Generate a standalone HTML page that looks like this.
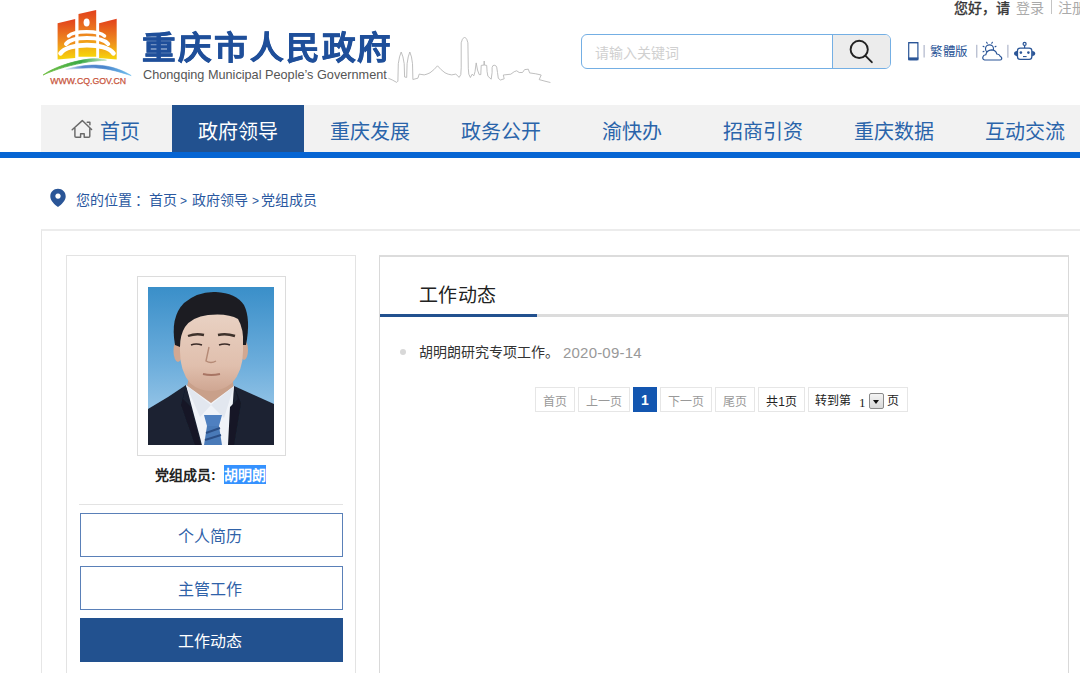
<!DOCTYPE html>
<html lang="zh-CN">
<head>
<meta charset="utf-8">
<style>
*{margin:0;padding:0;box-sizing:border-box;}
html,body{width:1080px;height:673px;overflow:hidden;background:#fff;}
body{font-family:"Liberation Sans",sans-serif;position:relative;color:#333;}
.abs{position:absolute;}
.t{position:absolute;white-space:nowrap;line-height:1;}
/* header */
#topuser{left:954px;top:1px;font-size:14px;color:#333;}
#search{left:581px;top:34px;width:310px;height:35px;border:1px solid #74afe4;border-radius:6px;overflow:hidden;}
#search .ph{left:13px;top:11px;font-size:14px;color:#d0d0d0;}
#search .btn{position:absolute;left:250px;top:0;width:60px;height:33px;background:#ececec;border-left:1px solid #74afe4;}
/* nav */
#nav{left:41px;top:105px;width:1039px;height:47px;background:#f2f2f2;}
#navline{left:0;top:152px;width:1080px;height:6px;background:#0665d3;}
.nv{position:absolute;top:0;height:47px;font-size:20px;color:#2a64aa;line-height:54px;text-align:center;}
.nv.act{background:#22518f;color:#fff;}
/* breadcrumb */
.crumb{top:193px;font-size:14px;color:#2a58a0;}
/* main */
#outer{left:41px;top:229px;width:1100px;height:500px;border:1px solid #e6e6e6;border-top:2px solid #ececec;}
#lp{left:66px;top:255px;width:290px;height:500px;border:1px solid #e3e3e3;}
#rp{left:379px;top:255px;width:690px;height:500px;border:1px solid #d9d9d9;border-top:2px solid #dcdcdc;}
#frame{left:137px;top:276px;width:149px;height:180px;border:1px solid #dcdcdc;}
.mb{position:absolute;left:80px;width:263px;height:44px;border:1px solid #5a80b8;font-size:16px;color:#2f62a8;text-align:center;line-height:45px;padding-right:3px;}
.mb.act{background:#22518f;color:#fff;border-color:#22518f;}
.pg{position:absolute;top:387px;height:25px;border:1px solid #e6e6e6;font-size:12px;color:#999;line-height:28px;text-align:center;}
</style>
</head>
<body>

<!-- top user -->
<div class="t" style="left:954px;top:1px;font-size:14px;color:#333;-webkit-text-stroke:0.35px #333;">您好，请</div>
<div class="t" style="left:1016px;top:1px;font-size:14px;color:#aaa;">登录</div>
<div class="abs" style="left:1051px;top:0px;width:1px;height:14px;background:#c4c4c4;"></div>
<div class="t" style="left:1058px;top:1px;font-size:14px;color:#aaa;">注册</div>

<!-- logo -->
<svg class="abs" style="left:0;top:0" width="140" height="95" viewBox="0 0 140 95">
<defs>
<linearGradient id="lg1" x1="0" y1="0" x2="0" y2="1"><stop offset="0" stop-color="#e2401c"/><stop offset="0.55" stop-color="#ee8a1e"/><stop offset="1" stop-color="#f7d60a"/></linearGradient>
<linearGradient id="lg2" x1="0" y1="0" x2="1" y2="0"><stop offset="0" stop-color="#8cc63f"/><stop offset="0.5" stop-color="#3aaa3a"/><stop offset="1" stop-color="#b8dca8"/></linearGradient>
<linearGradient id="lg3" x1="0" y1="0" x2="1" y2="0"><stop offset="0" stop-color="#d6e4f5"/><stop offset="0.5" stop-color="#5b8fd0"/><stop offset="1" stop-color="#7ec0ea"/></linearGradient>
</defs>
<path d="M57.6 23.3 L75.2 19.1 L75.2 58 L57.6 59.5 Z" fill="url(#lg1)"/>
<path d="M78.5 13.9 L96.2 9.9 L96.2 56.8 L78.5 56.8 Z" fill="url(#lg1)"/>
<path d="M99.1 23.3 L116.7 18.8 L116.7 59.5 L99.1 58 Z" fill="url(#lg1)"/>
<ellipse cx="86.6" cy="22.4" rx="3" ry="4" fill="#fff"/>
<path d="M60.5 53.4 C68 42.3, 106 42.3, 113.5 53.4" stroke="#fff" stroke-width="4.6" fill="none" stroke-linecap="round"/>
<path d="M66 44 C72 36, 102 36, 108.2 44" stroke="#fff" stroke-width="4" fill="none" stroke-linecap="round"/>
<path d="M68.5 36 C74 30.3, 99 30.3, 104.6 36" stroke="#fff" stroke-width="3.4" fill="none" stroke-linecap="round"/>
<linearGradient id="g2" x1="43" y1="0" x2="107" y2="0" gradientUnits="userSpaceOnUse"><stop offset="0" stop-color="#72c043"/><stop offset="0.6" stop-color="#3aa946"/><stop offset="1" stop-color="#c8e6c8"/></linearGradient>
<linearGradient id="g3" x1="66" y1="0" x2="131" y2="0" gradientUnits="userSpaceOnUse"><stop offset="0" stop-color="#dde8f4"/><stop offset="0.25" stop-color="#5b8ad0"/><stop offset="0.6" stop-color="#4a86cc"/><stop offset="1" stop-color="#72c0ee"/></linearGradient>
<path d="M43.1 75 C52 68.5, 70 61.5, 88.9 59.1 C96 58.4, 102 59, 106.5 60.2 C100 60.6, 94 61, 88.9 61.8 C72 64.5, 56 69, 43.1 75 Z" fill="url(#g2)" stroke="url(#g2)" stroke-width="0.8"/>
<path d="M65.8 69.4 C78 66, 88 65, 96 65.1 C112 65.6, 124 71, 131.2 75.6 C122 72.8, 110 68.6, 96 67.9 C86 67.6, 76 68.5, 65.8 69.4 Z" fill="url(#g3)" stroke="url(#g3)" stroke-width="0.6"/>
<text x="50.3" y="83.9" font-family="Liberation Sans" font-size="8.9" fill="#c8553d" stroke="#c8553d" stroke-width="0.25" textLength="75.7" lengthAdjust="spacingAndGlyphs">WWW.CQ.GOV.CN</text>
</svg>
<svg class="abs" style="left:380px;top:30px" width="180" height="60" viewBox="380 30 180 60">
<path d="M388.3 78.2 Q392 79.6 396.7 82.4 L397.9 81.2 L398.3 63.7 Q399.3 56 401.2 52 Q403.2 56 404.2 63.7 L404.6 77 L406.7 77.4 L407.1 63.7 Q408 56 409.8 52 Q411.8 56 412.5 63.7 L412.9 79.5 L417.9 78.2 L419.2 74.1 L424.2 74.9 Q427 74.3 430 72.8 Q434 70 437.5 65.8 Q441 70 445 72.8 Q448 74.5 451.7 74.9 L455.8 74.1 L459.2 77.4 L460.8 74.5 L461.2 67.8 L461.2 42.8 Q462 38.5 464.6 37 Q467.2 38.5 467.9 42.8 L468.3 68.3 L468.8 74.2 L470.4 77.5 L472.1 74.2 L473.8 75.8 L475 71.7 L476.2 62.9 L477.5 70 L479.2 74.6 L480.8 74.6 L481.2 65.4 L484.2 65 L484.2 61 L484.2 65 L486.7 65.4 L487.1 71.7 L487.9 76.2 L491.2 79.2 L492.1 72.5 L492.1 67.5 Q492.6 65 494.2 65.2 Q496.2 65.3 496.7 67.1 L497.5 72.5 L498.3 78.3 L500.4 80 L504.2 78.8 L503.3 75 L510.8 74.2 L514.2 71.7 L516.7 70.8 L519.2 72.5 L522.5 72.5 L524.6 69.6 L528.3 69.2 L529.6 72.9 L535.8 73.8 L541.2 75 L539.2 79.6 L545 81.2 L550.4 82.5" stroke="#b8b8b8" stroke-width="0.9" fill="none" stroke-linejoin="round"/>
</svg>
<div class="t" style="left:142px;top:31.5px;font-size:32px;letter-spacing:2.2px;font-weight:900;color:#1f4f9a;-webkit-text-stroke:0.6px #1f4f9a;transform:scaleX(1.05);transform-origin:0 0;">重庆市人民政府</div>
<div class="t" style="left:143px;top:69px;font-size:12.7px;color:#555;">Chongqing Municipal People’s Government</div>

<!-- search -->
<div class="abs" id="search"><div class="t ph">请输入关键词</div><div class="btn"></div></div>
<svg class="abs" style="left:840px;top:34px" width="45" height="34" viewBox="840 34 45 34">
<circle cx="859.2" cy="49.4" r="8.6" stroke="#222" stroke-width="1.9" fill="none"/>
<line x1="865.3" y1="55.6" x2="871.8" y2="62.2" stroke="#222" stroke-width="1.9" stroke-linecap="round"/>
</svg>
<svg class="abs" style="left:900px;top:36px" width="180" height="30" viewBox="900 36 180 30">
<g fill="none" stroke="#2a5597">
<rect x="908.7" y="42.6" width="9.2" height="17" rx="1" stroke-width="1.2"/>
</g>
<rect x="908.2" y="57.4" width="10.2" height="2.9" fill="#2a5597"/>
<rect x="908.2" y="42" width="10.2" height="1.2" fill="#2a5597"/>
<rect x="923.6" y="45" width="1" height="12.5" fill="#a0a8c0"/>
<rect x="976.3" y="44.8" width="1" height="12.9" fill="#a0a8c0"/>
<rect x="1007.4" y="44.8" width="1" height="12.9" fill="#a0a8c0"/>
<g fill="none" stroke="#2a5597" stroke-width="1.15" stroke-linecap="round" stroke-linejoin="round">
<circle cx="989.5" cy="48.8" r="4"/>
<path d="M984.6 60 Q982.4 59.6 982.8 57.2 Q983.3 55 985.8 54.8 Q986.6 50.2 991.6 49.9 Q995.8 50 996.8 54 Q999.3 53.9 1000.2 56.2 Q1002.2 57.2 1001.6 59.2 Q1001.2 60 1000 60 Z" fill="#fff"/>
<line x1="986.6" y1="42.3" x2="987.2" y2="43.3"/>
<line x1="992.4" y1="42.3" x2="991.8" y2="43.3"/>
<line x1="983.1" y1="46.3" x2="984" y2="46.8"/>
<line x1="996" y1="46.3" x2="995.1" y2="46.8"/>
<line x1="983.1" y1="51.8" x2="984" y2="51.3"/>
</g>
<g fill="none" stroke="#2a5597" stroke-width="1.25">
<rect x="1017.5" y="48" width="14.3" height="11.3" rx="2.6"/>
<circle cx="1024.6" cy="43.9" r="1.5"/>
<line x1="1024.6" y1="45.4" x2="1024.6" y2="48"/>
</g>
<path d="M1017.2 50.8 Q1014 51.5 1014 53.6 Q1014 55.7 1017.2 56.4 Z" fill="#2a5597"/>
<path d="M1032.1 50.8 Q1035.2 51.5 1035.2 53.6 Q1035.2 55.7 1032.1 56.4 Z" fill="#2a5597"/>
<circle cx="1020.9" cy="52.6" r="1.3" fill="#2a5597"/>
<circle cx="1028.4" cy="52.6" r="1.3" fill="#2a5597"/>
<rect x="1023" y="56" width="3.6" height="1.1" fill="#2a5597"/>
</svg>
<div class="t" style="left:930px;top:46px;font-size:12.5px;color:#2a5597;letter-spacing:-0.3px">繁體版</div>

<!-- nav -->
<div class="abs" id="nav">
  <div class="nv" style="left:13px;width:131px;">首页</div>
  <svg class="abs" style="left:29px;top:14px" width="24" height="22" viewBox="70 119 24 22"><path d="M72.2 129.8 L82.3 120.6 L91.6 129.6 M74.9 128.3 V136.2 Q74.9 137.3 76 137.3 H80.6 V133.8 H84.2 V137.3 H88.7 Q89.8 137.3 89.8 136.2 V128.3 M87.2 122.3 H89.9 V124.8" fill="none" stroke="#6a6a6a" stroke-width="1.45" stroke-linejoin="round" stroke-linecap="round"/></svg>
  <div class="nv act" style="left:131px;width:132px;">政府领导</div>
  <div class="nv" style="left:263px;width:131px;">重庆发展</div>
  <div class="nv" style="left:394px;width:131px;">政务公开</div>
  <div class="nv" style="left:525px;width:131px;">渝快办</div>
  <div class="nv" style="left:656px;width:131px;">招商引资</div>
  <div class="nv" style="left:787px;width:131px;">重庆数据</div>
  <div class="nv" style="left:918px;width:131px;">互动交流</div>
</div>
<div class="abs" id="navline"></div>

<!-- breadcrumb -->
<svg class="abs" style="left:48px;top:186px" width="20" height="24" viewBox="48 186 20 24"><path d="M58 188.8 C62.4 188.8 65.7 192.1 65.7 196.4 C65.7 200.6 61.5 204.3 58 207 C54.5 204.3 50.3 200.6 50.3 196.4 C50.3 192.1 53.6 188.8 58 188.8 Z M58 193.4 A2.7 2.7 0 1 0 58.01 193.4 Z" fill="#2a5597" fill-rule="evenodd"/></svg>
<div class="t crumb" style="left:76px;">您的位置</div>
<div class="t crumb" style="left:134.5px;">：</div>
<div class="t crumb" style="left:149px;">首页</div>
<div class="t crumb" style="left:180px;top:195px;font-size:12px;">&gt;</div>
<div class="t crumb" style="left:192px;">政府领导</div>
<div class="t crumb" style="left:252px;top:195px;font-size:12px;">&gt;</div>
<div class="t crumb" style="left:261px;">党组成员</div>

<div class="abs" id="outer"></div>
<div class="abs" id="lp"></div>
<div class="abs" id="rp"></div>
<div class="abs" id="frame"></div>
<svg class="abs" style="left:148px;top:287px" width="126" height="158" viewBox="0 0 126 158">
<defs>
<linearGradient id="bgp" x1="0" y1="0" x2="0" y2="1"><stop offset="0" stop-color="#3a8fc9"/><stop offset="0.5" stop-color="#6eaedc"/><stop offset="1" stop-color="#b2d5ee"/></linearGradient>
<linearGradient id="skin" x1="0" y1="0" x2="0" y2="1"><stop offset="0" stop-color="#ead4c6"/><stop offset="0.7" stop-color="#e0bfad"/><stop offset="1" stop-color="#cfa692"/></linearGradient>
<filter id="soft" x="-10%" y="-10%" width="120%" height="120%"><feGaussianBlur stdDeviation="0.6"/></filter>
</defs>
<rect width="126" height="158" fill="url(#bgp)"/>
<g filter="url(#soft)">
<path d="M42 86 L84 86 L86 104 L63 118 L38 104 Z" fill="#c9a08a"/>
<path d="M0 122 L20 110 L38 98 L52 140 L54 158 L0 158 Z" fill="#1b2233"/>
<path d="M126 117 L106 108 L86 99 L80 140 L81 158 L126 158 Z" fill="#1b2233"/>
<path d="M38 98 L63 116 L86 99 L82 158 L54 158 Z" fill="#f0f3f8"/>
<path d="M38 98 L52 130 L63 118 Z" fill="#e2e7ef"/>
<path d="M86 99 L76 131 L63 118 Z" fill="#e2e7ef"/>
<path d="M38 98 L35 112 L43 120 L53 158 L47 158 L33 118 Z" fill="#131926"/>
<path d="M86 99 L90 112 L82 120 L80 158 L86 158 L93 116 Z" fill="#131926"/>
<path d="M56 128 L74 128 L71 139 L59 139 Z" fill="#4f80c0"/>
<path d="M59 139 L71 139 L74 158 L56 158 Z" fill="#4a7ab8"/>
<path d="M58 146 L72 141 M57 153 L73 148" stroke="#2c4f86" stroke-width="2"/>
<ellipse cx="30" cy="64" rx="4.5" ry="11" fill="#d2a892"/>
<ellipse cx="96" cy="63" rx="4" ry="10" fill="#d2a892"/>
<path d="M32 36 Q34 20 63 20 Q93 20 95 38 L95 64 Q95 84 84 96 Q74 104 63 104 Q51 104 42 96 Q32 84 32 64 Z" fill="url(#skin)"/>
<path d="M27 58 Q22 30 36 16 Q50 4 68 5 Q88 6 96 18 Q103 32 98 58 L95 58 Q96 42 90 32 Q80 26 60 28 Q44 30 37 40 Q32 48 32 60 Z" fill="#1d1e24"/>
<path d="M40 49 Q48 46 56 48" stroke="#3e302c" stroke-width="2.4" fill="none"/>
<path d="M70 48 Q78 46 87 49" stroke="#3e302c" stroke-width="2.4" fill="none"/>
<path d="M43 58 Q48 56 54 58" stroke="#3a2c28" stroke-width="1.6" fill="none"/>
<path d="M71 58 Q77 56 82 58" stroke="#3a2c28" stroke-width="1.6" fill="none"/>
<path d="M61 60 L58 74 Q63 77 68 74" stroke="#b58a76" stroke-width="1.4" fill="none"/>
<path d="M55 87 Q63 89 72 87" stroke="#a87464" stroke-width="2" fill="none"/>
</g>
</svg>

<div class="t" style="left:155px;top:468px;font-size:14px;font-weight:bold;color:#222;">党组成员:</div><div class="t" style="left:224px;top:465px;height:19px;width:42px;font-size:14px;line-height:20px;font-weight:bold;color:#fff;background:#3592ff;">胡明朗</div>
<div class="abs" style="left:79px;top:504px;width:264px;height:1px;background:#e3e3e3;"></div>
<div class="mb" style="top:513px;">个人简历</div>
<div class="mb" style="top:566px;">主管工作</div>
<div class="mb act" style="top:618px;">工作动态</div>

<!-- right panel -->
<div class="t" style="left:419px;top:286px;font-size:19px;color:#222;letter-spacing:0.4px">工作动态</div>
<div class="abs" style="left:380px;top:314px;width:688px;height:3px;background:#dcdcdc;"></div>
<div class="abs" style="left:380px;top:314px;width:157px;height:3px;background:#22518f;"></div>
<div class="abs" style="left:400px;top:349px;width:6px;height:6px;border-radius:50%;background:#d8d8d8;"></div>
<div class="t" style="left:419px;top:345px;font-size:14px;color:#333;">胡明朗研究专项工作。</div><div class="t" style="left:563px;top:345px;font-size:15px;color:#999;letter-spacing:0.2px">2020-09-14</div>

<div class="pg" style="left:535px;width:40px;">首页</div>
<div class="pg" style="left:578px;width:52px;">上一页</div>
<div class="pg" style="left:633px;width:24px;background:#1356b0;border-color:#1356b0;color:#fff;font-weight:bold;font-size:14px;line-height:25px;">1</div>
<div class="pg" style="left:660px;width:52px;">下一页</div>
<div class="pg" style="left:715px;width:40px;">尾页</div>
<div class="pg" style="left:758px;width:47px;color:#222;">共1页</div>
<div class="pg" style="left:808px;width:100px;color:#222;"></div>
<div class="t" style="left:815px;top:395px;font-size:12px;color:#222;">转到第</div>
<div class="t" style="left:859px;top:396px;font-size:13px;color:#222;font-family:'Liberation Serif',serif;">1</div>
<div class="abs" style="left:869px;top:393px;width:15px;height:16px;border:1px solid #8a8a8a;border-radius:2px;background:linear-gradient(#f4f4f4,#d8d8d8);"></div>
<div class="abs" style="left:873px;top:400px;width:0;height:0;border-left:3.5px solid transparent;border-right:3.5px solid transparent;border-top:4px solid #111;"></div>
<div class="t" style="left:887px;top:395px;font-size:12px;color:#222;">页</div>

</body>
</html>
